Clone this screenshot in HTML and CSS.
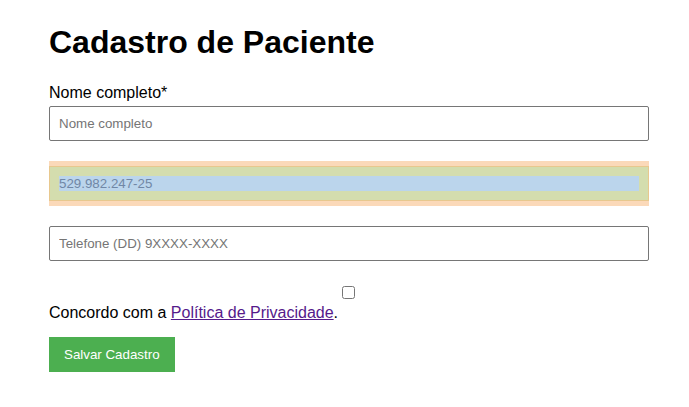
FILE: index.html
```html
<!DOCTYPE html>
<html lang="pt-BR">
<head>
<meta charset="utf-8">
<title>Cadastro de Paciente</title>
<link rel="stylesheet" href="styles.css">
</head>
<body>
<form class="page">
  <h1 class="title">Cadastro de Paciente</h1>
  <div class="field">
    <label class="label" for="nome">Nome completo*</label>
    <input class="input" id="nome" type="text" placeholder="Nome completo">
  </div>
  <div class="field field-highlight">
    <input class="input input-highlight" type="text" value="529.982.247-25">
  </div>
  <div class="field">
    <input class="input" type="tel" placeholder="Telefone (DD) 9XXXX-XXXX">
  </div>
  <input class="check" type="checkbox">
  <p class="consent">Concordo com a <a class="link" href="#">Política de Privacidade</a>.</p>
  <button class="btn" type="button">Salvar Cadastro</button>
</form>
</body>
</html>
```
FILE: styles.css
```css
html, body {
  margin: 0;
  padding: 0;
  background: #ffffff;
}
body {
  font-family: "Liberation Sans", Arial, sans-serif;
  color: #000000;
}
.page {
  width: 600px;
  padding: 24px 0 0 49px;
  display: flex;
  flex-direction: column;
}
.title {
  margin: 0 0 23px;
  font-size: 32px;
  line-height: 37px;
  font-weight: bold;
}
.field {
  display: flex;
  flex-direction: column;
  margin-bottom: 20px;
}
.label {
  font-size: 16px;
  line-height: 18px;
  margin-bottom: 4px;
}
.input {
  box-sizing: border-box;
  width: 600px;
  height: 35px;
  margin: 0;
  padding: 9px;
  border: 1px solid #767676;
  border-radius: 2px;
  font-family: "Liberation Sans", Arial, sans-serif;
  font-size: 13.333px;
  line-height: 15px;
  color: #000;
  background: #fff;
  outline: none;
}
.input::placeholder {
  color: #757575;
  opacity: 1;
}
.field-highlight {
  padding: 5px 0;
  background: #fbd9b9;
}
.input-highlight {
  border-radius: 0;
  border-color: #e8c88e;
  background: linear-gradient(#bbd5ec, #bbd5ec) content-box, linear-gradient(#d4ddae, #d4ddae) padding-box;
  color: #7087a6;
}
.check {
  display: block;
  width: 13px;
  height: 13px;
  margin: 5px 0 5px 293px;
}
.consent {
  margin: 0 0 15px;
  font-size: 16px;
  line-height: 18px;
}
.link {
  color: #551a8b;
}
.btn {
  align-self: flex-start;
  border: none;
  background: #4caf50;
  color: #ffffff;
  font-family: "Liberation Sans", Arial, sans-serif;
  font-size: 13.333px;
  line-height: 15px;
  padding: 10px 15px;
  margin: 0;
  border-radius: 0;
}
```
